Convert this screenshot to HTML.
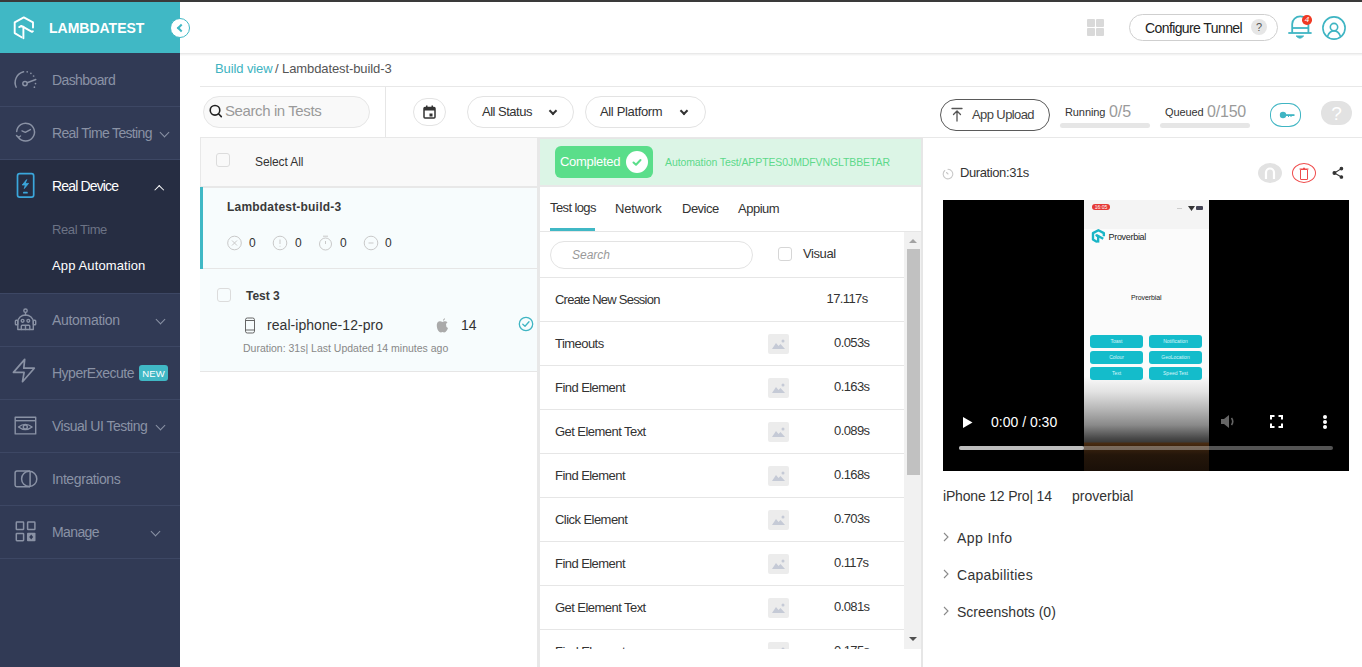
<!DOCTYPE html>
<html><head><meta charset="utf-8">
<style>
*{box-sizing:border-box;margin:0;padding:0}
html,body{width:1362px;height:667px;overflow:hidden;background:#fff;font-family:"Liberation Sans",sans-serif;color:#333}
.a{position:absolute}
.t{position:absolute;white-space:nowrap;line-height:1}
#topbar{left:0;top:0;width:1362px;height:2px;background:#3a3a3a}
#side{left:0;top:2px;width:180px;height:665px;background:#313a55}
#logo{left:0;top:2px;width:180px;height:51px;background:#40b8c5}
.si{position:absolute;left:0;width:180px;height:53px;border-bottom:1px solid #3d4764}
.st{position:absolute;left:52px;font-size:14px;color:#8a92a5;white-space:nowrap;line-height:1}
.chev{position:absolute;width:7px;height:7px;border-right:1.5px solid #8a92a5;border-bottom:1.5px solid #8a92a5;transform:rotate(45deg)}
</style></head><body>
<div id="topbar" class="a"></div>
<div id="side" class="a"></div>
<div id="logo" class="a"></div>
<!-- logo icon -->
<svg class="a" style="left:8px;top:12px" width="32" height="32" viewBox="0 0 32 32" fill="none" stroke="#fff" stroke-width="1.9" stroke-linecap="round" stroke-linejoin="round">
<path d="M13.6 25.2 L6.7 21.1 V10.3 L15.8 5.4 L25 10.3 V15.6"/>
<path d="M11.2 15.1 L13.3 13.9 L24 19.9 L24.9 19.3"/>
<path d="M15.4 14.8 V26.3"/>
</svg>
<div class="t" style="left:49px;top:21px;font-size:14px;font-weight:bold;color:#fff;letter-spacing:0">LAMBDATEST</div>
<!-- collapse btn -->
<div class="a" style="left:170px;top:18px;width:20px;height:20px;border-radius:50%;background:#fff;border:1px solid #40b8c5"></div>
<div class="a" style="left:178px;top:24.5px;width:6px;height:6px;border-left:2px solid #40b8c5;border-bottom:2px solid #40b8c5;transform:rotate(45deg)"></div>

<!-- sidebar items -->
<div class="si" style="top:54px"></div>
<div class="st" style="top:72.5px;letter-spacing:-0.6px">Dashboard</div>
<div class="si" style="top:107px"></div>
<div class="st" style="top:125.5px;letter-spacing:-0.66px">Real Time Testing</div>
<div class="chev" style="left:160.5px;top:129px"></div>
<div class="a" style="left:0;top:160px;width:180px;height:134px;background:#262d42;border-bottom:1px solid #3d4764"></div>
<div class="st" style="top:178.5px;color:#fff;letter-spacing:-0.85px">Real Device</div>
<div class="chev" style="left:156px;top:187px;width:6.5px;height:6.5px;border-color:#fff;border-width:1.8px;transform:rotate(-135deg)"></div>
<div class="st" style="top:223px;font-size:13px;color:#6c7385;letter-spacing:-0.4px">Real Time</div>
<div class="st" style="top:259px;font-size:13px;color:#fff;letter-spacing:0.12px">App Automation</div>
<div class="si" style="top:294px"></div>
<div class="st" style="top:312.5px;letter-spacing:-0.3px">Automation</div>
<div class="chev" style="left:157px;top:316px"></div>
<div class="si" style="top:347px"></div>
<div class="st" style="top:365.5px;letter-spacing:-0.5px">HyperExecute</div>
<div class="a" style="left:139px;top:365px;width:29px;height:16px;border-radius:3px;background:#40b8c5;color:#fff;font-size:9.5px;line-height:17px;text-align:center;letter-spacing:0.1px">NEW</div>
<div class="si" style="top:400px"></div>
<div class="st" style="top:418.5px;letter-spacing:-0.5px">Visual UI Testing</div>
<div class="chev" style="left:156.5px;top:422px"></div>
<div class="si" style="top:453px"></div>
<div class="st" style="top:471.5px;letter-spacing:-0.4px">Integrations</div>
<div class="si" style="top:506px"></div>
<div class="st" style="top:524.5px;letter-spacing:-0.6px">Manage</div>
<div class="chev" style="left:151.5px;top:528px"></div>

<!-- header -->
<div class="a" style="left:180px;top:53px;width:1182px;height:1px;background:#e9e9e9"></div>
<div class="a" style="left:180px;top:54px;width:1182px;height:1px;background:#f3f3f3"></div>
<div class="a" style="left:180px;top:55px;width:1182px;height:1px;background:#fafafa"></div>
<!-- grid icon -->
<div class="a" style="left:1087px;top:19px;width:8px;height:8px;background:#d9d9d9;border-radius:1px"></div>
<div class="a" style="left:1096px;top:19px;width:8px;height:8px;background:#d9d9d9;border-radius:1px"></div>
<div class="a" style="left:1087px;top:28px;width:8px;height:8px;background:#d9d9d9;border-radius:1px"></div>
<div class="a" style="left:1096px;top:28px;width:8px;height:8px;background:#d9d9d9;border-radius:1px"></div>
<!-- configure tunnel -->
<div class="a" style="left:1129px;top:14px;width:149px;height:27px;border:1px solid #cfcfcf;border-radius:14px"></div>
<div class="t" style="left:1145px;top:21px;font-size:14px;color:#222;letter-spacing:-0.6px">Configure Tunnel</div>
<div class="a" style="left:1251px;top:19px;width:16px;height:16px;border-radius:50%;background:#e6e6e6;color:#555;font-size:11px;line-height:16px;text-align:center">?</div>
<!-- bell -->
<svg class="a" style="left:1286px;top:14px" width="28" height="28" viewBox="0 0 28 28" fill="none" stroke="#3fb5c3" stroke-width="1.8" stroke-linecap="butt" stroke-linejoin="round">
<path d="M6.2 19 V10 A8.1 7.6 0 0 1 22.4 10 V19"/>
<path d="M6.2 14 H22.4"/>
<path d="M2.3 19 H25.6"/>
<path d="M10.2 22 H17.6 Q14 26.3 10.2 22 Z" fill="#3fb5c3" stroke-width="1"/>
</svg>
<div class="a" style="left:1302.2px;top:15.2px;width:9.6px;height:9.6px;border-radius:50%;background:#f03a24;color:#fff;font-size:8px;line-height:10px;text-align:center;font-style:italic">4</div>
<!-- user -->
<svg class="a" style="left:1322px;top:16px" width="24" height="24" viewBox="0 0 24 24" fill="none" stroke="#3fb5c3" stroke-width="1.6">
<circle cx="12" cy="12" r="11.1"/>
<circle cx="12" cy="11.1" r="3.7"/>
<path d="M5.6 20.2 Q7.5 14.9 12 14.9 Q16.5 14.9 18.4 20.2"/>
</svg>
<!-- breadcrumb -->
<div class="t" style="left:215px;top:62px;font-size:13px;color:#40b3c1;letter-spacing:-0.1px">Build view</div>
<div class="t" style="left:275px;top:62px;font-size:13px;color:#555;letter-spacing:-0.1px">/ Lambdatest-build-3</div>
<div class="a" style="left:200px;top:86px;width:1162px;height:1px;background:#e8e8e8"></div>
<!-- toolbar -->
<div class="a" style="left:203px;top:96px;width:167px;height:32px;border:1px solid #e6e6e6;border-radius:16px;background:#f9f9f9"></div>
<svg class="a" style="left:209px;top:104px" width="14" height="15" viewBox="0 0 14 15" fill="none" stroke="#222" stroke-width="1.6" stroke-linecap="round">
<circle cx="6" cy="6.3" r="4.8"/><path d="M9.5 9.8 L12.3 12.6"/>
</svg>
<div class="t" style="left:225px;top:103px;font-size:15px;color:#9a9a9a;letter-spacing:-0.4px">Search in Tests</div>
<div class="a" style="left:385px;top:87px;width:1px;height:50px;background:#e6e6e6"></div>
<div class="a" style="left:413px;top:98px;width:33px;height:28px;border:1px solid #e3e3e3;border-radius:14px"></div>
<svg class="a" style="left:423px;top:105px" width="13" height="14" viewBox="0 0 13 14">
<rect x="1" y="2.5" width="11" height="10.5" rx="1" fill="none" stroke="#333" stroke-width="1.5"/>
<rect x="1" y="2.5" width="11" height="3" fill="#333"/>
<rect x="3" y="0.5" width="1.5" height="3" fill="#333"/><rect x="8.5" y="0.5" width="1.5" height="3" fill="#333"/>
<rect x="6.5" y="8.5" width="3" height="3" fill="#333"/>
</svg>
<div class="a" style="left:467px;top:96px;width:107px;height:32px;border:1px solid #e3e3e3;border-radius:16px"></div>
<div class="t" style="left:482px;top:105px;font-size:13px;color:#333;letter-spacing:-0.5px">All Status</div>
<div class="a" style="left:550px;top:107.5px;width:6px;height:6px;border-right:2px solid #333;border-bottom:2px solid #333;transform:rotate(45deg)"></div>
<div class="a" style="left:585px;top:96px;width:121px;height:32px;border:1px solid #e3e3e3;border-radius:16px"></div>
<div class="t" style="left:600px;top:105px;font-size:13px;color:#333;letter-spacing:-0.35px">All Platform</div>
<div class="a" style="left:681px;top:107.5px;width:6px;height:6px;border-right:2px solid #333;border-bottom:2px solid #333;transform:rotate(45deg)"></div>

<div class="a" style="left:940px;top:99px;width:110px;height:32px;border:1px solid #5a5a5a;border-radius:16px"></div>
<svg class="a" style="left:951px;top:107px" width="12" height="15" viewBox="0 0 12 15" fill="none" stroke="#555" stroke-width="1.3" stroke-linecap="round">
<path d="M1 1.5 H11 M6 4 V14 M2.5 7.5 L6 4 L9.5 7.5"/>
</svg>
<div class="t" style="left:972px;top:108px;font-size:13px;color:#444;letter-spacing:-0.6px">App Upload</div>
<div class="t" style="left:1065px;top:107px;font-size:11px;color:#333;letter-spacing:-0.1px">Running</div>
<div class="t" style="left:1109px;top:104px;font-size:16px;color:#9a9a9a;letter-spacing:-0.1px">0/5</div>
<div class="a" style="left:1060px;top:123px;width:90px;height:5px;border-radius:3px;background:#e6e6e6"></div>
<div class="t" style="left:1165px;top:107px;font-size:11px;color:#333;letter-spacing:-0.1px">Queued</div>
<div class="t" style="left:1207px;top:104px;font-size:16px;color:#9a9a9a;letter-spacing:-0.2px">0/150</div>
<div class="a" style="left:1160px;top:123px;width:90px;height:5px;border-radius:3px;background:#e6e6e6"></div>
<div class="a" style="left:1270px;top:103px;width:31px;height:24px;border:1.3px solid #3fb5c3;border-radius:12px/11px"></div>
<svg class="a" style="left:1279px;top:110px" width="16" height="10" viewBox="0 0 16 10" fill="#3fb5c3">
<circle cx="4" cy="5" r="3.2"/><rect x="6" y="4.2" width="9" height="1.8"/><path d="M9 6 H10 V7 H9 Z M11.5 6 H12.5 V7 H11.5 Z" /><path d="M15 4.2 L16 5.1 L15 6 Z"/>
</svg>
<div class="a" style="left:1321px;top:101px;width:31px;height:24px;border-radius:12px;background:#e2e2e2;color:#fff;font-size:19px;line-height:25px;text-align:center">?</div>
<div class="a" style="left:200px;top:137px;width:1162px;height:1px;background:#e8e8e8"></div>
<!-- list panel -->
<div class="a" style="left:200px;top:138px;width:337px;height:50px;background:#f9f9f9;border-left:1px solid #e8e8e8;border-bottom:2px solid #e8e8e8"></div>
<div class="a" style="left:216px;top:153px;width:14px;height:14px;border:1px solid #dcdcdc;border-radius:3px"></div>
<div class="t" style="left:255px;top:156px;font-size:12px;color:#333;letter-spacing:-0.1px">Select All</div>
<div class="a" style="left:200px;top:188px;width:337px;height:81px;background:#f7fcfd;border-bottom:1px solid #e6e6e6"></div>
<div class="a" style="left:200px;top:187px;width:3px;height:82px;background:#40b8c5"></div>
<div class="t" style="left:227px;top:201px;font-size:12px;font-weight:bold;color:#3a3a3a;letter-spacing:0.2px">Lambdatest-build-3</div>
<svg class="a" style="left:227px;top:235px" width="170" height="16" viewBox="0 0 170 16" fill="none" stroke="#c9c9c9" stroke-width="1">
<circle cx="7.5" cy="8" r="6.8"/><path d="M5 5.5 L10 10.5 M10 5.5 L5 10.5"/>
<circle cx="53" cy="8" r="6.8"/><path d="M53 4.5 V9 M53 10.8 V11.6"/>
<circle cx="98.5" cy="9" r="6"/><path d="M96 1.2 H101 M98.5 6 V9"/>
<circle cx="144" cy="8" r="6.8"/><path d="M141.5 8 H146.5"/>
</svg>
<div class="t" style="left:249px;top:237px;font-size:12px;color:#333">0</div>
<div class="t" style="left:295px;top:237px;font-size:12px;color:#333">0</div>
<div class="t" style="left:340px;top:237px;font-size:12px;color:#333">0</div>
<div class="t" style="left:385px;top:237px;font-size:12px;color:#333">0</div>
<div class="a" style="left:200px;top:269px;width:337px;height:103px;background:#f7fcfd;border-bottom:1px solid #e6e6e6"></div>
<div class="a" style="left:217px;top:288px;width:14px;height:14px;border:1px solid #dcdcdc;border-radius:3px"></div>
<div class="t" style="left:246px;top:290px;font-size:12px;font-weight:bold;color:#3a3a3a;letter-spacing:0px">Test 3</div>
<svg class="a" style="left:244px;top:317px" width="12" height="17" viewBox="0 0 12 17" fill="none" stroke="#666" stroke-width="1">
<rect x="1.5" y="1" width="9" height="15" rx="1.8"/><path d="M1.5 3.5 H10.5 M1.5 13 H10.5"/>
</svg>
<div class="t" style="left:267px;top:318px;font-size:14px;color:#333;letter-spacing:0.05px">real-iphone-12-pro</div>
<svg class="a" style="left:436px;top:317px" width="13" height="16" viewBox="0 0 13 16" fill="#aaa">
<path d="M9 1 Q9.2 3 7 4 Q6.8 2 9 1 Z"/>
<path d="M6.5 5 Q5 4 3.5 4.3 Q0.5 5 0.8 9 Q1.2 13.5 3.5 15 Q4.8 15.8 6.5 15 Q8.2 15.8 9.5 15 Q11.2 13.8 12 11 Q9.8 10 10 7.5 Q10.2 6 11.5 5.2 Q10 4 8.5 4.3 Q7.5 4.5 6.5 5 Z"/>
</svg>
<div class="t" style="left:461px;top:318px;font-size:14px;color:#333">14</div>
<svg class="a" style="left:518px;top:316px" width="16" height="16" viewBox="0 0 16 16" fill="none" stroke="#3fb5c3" stroke-width="1.3" stroke-linecap="round" stroke-linejoin="round">
<circle cx="8" cy="8" r="6.7"/><path d="M4.8 8.3 L7 10.3 L11 5.8"/>
</svg>
<div class="t" style="left:243px;top:343px;font-size:10.5px;color:#888;letter-spacing:0">Duration: 31s| Last Updated 14 minutes ago</div>
<div class="a" style="left:537px;top:138px;width:3px;height:529px;background:#e8e8e8"></div>
<!-- logs panel -->
<div class="a" style="left:540px;top:138px;width:381px;height:1px;background:#e6e6e6"></div>
<div class="a" style="left:540px;top:139px;width:381px;height:47px;background:#dcf5e6"></div>
<div class="a" style="left:540px;top:185px;width:381px;height:2px;background:#e8e8e8"></div>
<div class="a" style="left:555px;top:146px;width:98px;height:32px;background:#5ade8a;border-radius:6px"></div>
<div class="t" style="left:560px;top:155px;font-size:13px;color:#fff;letter-spacing:-0.3px">Completed</div>
<div class="a" style="left:626px;top:151px;width:22px;height:22px;border-radius:50%;background:#fff"></div>
<svg class="a" style="left:630px;top:155px" width="14" height="14" viewBox="0 0 14 14" fill="none" stroke="#5ade8a" stroke-width="2" stroke-linecap="round" stroke-linejoin="round"><path d="M3.5 7.5 L6 9.8 L10.5 5"/></svg>
<div class="t" style="left:665px;top:157px;font-size:10.5px;color:#5cd98a;letter-spacing:-0.1px">Automation Test/APPTES0JMDFVNGLTBBETAR</div>
<div class="a" style="left:921px;top:138px;width:2px;height:529px;background:#e6e6e6"></div>
<!-- tabs -->
<div class="t" style="left:550px;top:201px;font-size:13px;color:#333;letter-spacing:-0.6px">Test logs</div>
<div class="t" style="left:615px;top:202px;font-size:13px;color:#333;letter-spacing:-0.15px">Network</div>
<div class="t" style="left:682px;top:202px;font-size:13px;color:#333;letter-spacing:-0.5px">Device</div>
<div class="t" style="left:738px;top:202px;font-size:13px;color:#333;letter-spacing:-0.5px">Appium</div>
<div class="a" style="left:550px;top:228px;width:45px;height:3px;background:#40b8c5"></div>
<div class="a" style="left:540px;top:231px;width:381px;height:1px;background:#e6e6e6"></div>
<!-- logs list -->
<div class="a" style="left:540px;top:232px;width:381px;height:417px;overflow:hidden">
<div class="a" style="left:10px;top:9px;width:203px;height:28px;border:1px solid #e3e3e3;border-radius:14px"></div>
<div class="t" style="left:32px;top:17px;font-size:12px;font-style:italic;color:#999">Search</div>
<div class="a" style="left:238px;top:15px;width:14px;height:14px;border:1px solid #d6d6d6;border-radius:3px"></div>
<div class="t" style="left:263px;top:15px;font-size:13px;color:#333;letter-spacing:-0.4px">Visual</div>
<div class="a" style="left:0;top:45px;width:364px;height:1px;background:#e6e6e6"></div>
<div class="a" style="left:0;top:46px;width:364px;height:44px;border-bottom:1px solid #e6e6e6"></div>
<div class="t" style="left:15px;top:61px;font-size:13px;color:#333;letter-spacing:-0.77px">Create New Session</div>
<div class="t" style="left:286.5px;top:60px;font-size:13px;color:#333;letter-spacing:-0.6px">17.117s</div>
<div class="a" style="left:0;top:90px;width:364px;height:44px;border-bottom:1px solid #e6e6e6"></div>
<div class="t" style="left:15px;top:105px;font-size:13px;color:#333;letter-spacing:-0.55px">Timeouts</div>
<div class="a" style="left:228px;top:102px;width:21px;height:20px;background:#ececec;border-radius:2px"></div>
<svg class="a" style="left:232px;top:107px" width="13" height="10" viewBox="0 0 13 10" fill="#c5cad6"><path d="M0 10 L4 4 L6.5 7 L8.5 5 L13 10 Z"/><circle cx="11" cy="2" r="1.5"/></svg>
<div class="t" style="left:294px;top:104px;font-size:13px;color:#333;letter-spacing:-0.6px">0.053s</div>
<div class="a" style="left:0;top:134px;width:364px;height:44px;border-bottom:1px solid #e6e6e6"></div>
<div class="t" style="left:15px;top:149px;font-size:13px;color:#333;letter-spacing:-0.55px">Find Element</div>
<div class="a" style="left:228px;top:146px;width:21px;height:20px;background:#ececec;border-radius:2px"></div>
<svg class="a" style="left:232px;top:151px" width="13" height="10" viewBox="0 0 13 10" fill="#c5cad6"><path d="M0 10 L4 4 L6.5 7 L8.5 5 L13 10 Z"/><circle cx="11" cy="2" r="1.5"/></svg>
<div class="t" style="left:294px;top:148px;font-size:13px;color:#333;letter-spacing:-0.6px">0.163s</div>
<div class="a" style="left:0;top:178px;width:364px;height:44px;border-bottom:1px solid #e6e6e6"></div>
<div class="t" style="left:15px;top:193px;font-size:13px;color:#333;letter-spacing:-0.55px">Get Element Text</div>
<div class="a" style="left:228px;top:190px;width:21px;height:20px;background:#ececec;border-radius:2px"></div>
<svg class="a" style="left:232px;top:195px" width="13" height="10" viewBox="0 0 13 10" fill="#c5cad6"><path d="M0 10 L4 4 L6.5 7 L8.5 5 L13 10 Z"/><circle cx="11" cy="2" r="1.5"/></svg>
<div class="t" style="left:294px;top:192px;font-size:13px;color:#333;letter-spacing:-0.6px">0.089s</div>
<div class="a" style="left:0;top:222px;width:364px;height:44px;border-bottom:1px solid #e6e6e6"></div>
<div class="t" style="left:15px;top:237px;font-size:13px;color:#333;letter-spacing:-0.55px">Find Element</div>
<div class="a" style="left:228px;top:234px;width:21px;height:20px;background:#ececec;border-radius:2px"></div>
<svg class="a" style="left:232px;top:239px" width="13" height="10" viewBox="0 0 13 10" fill="#c5cad6"><path d="M0 10 L4 4 L6.5 7 L8.5 5 L13 10 Z"/><circle cx="11" cy="2" r="1.5"/></svg>
<div class="t" style="left:294px;top:236px;font-size:13px;color:#333;letter-spacing:-0.6px">0.168s</div>
<div class="a" style="left:0;top:266px;width:364px;height:44px;border-bottom:1px solid #e6e6e6"></div>
<div class="t" style="left:15px;top:281px;font-size:13px;color:#333;letter-spacing:-0.55px">Click Element</div>
<div class="a" style="left:228px;top:278px;width:21px;height:20px;background:#ececec;border-radius:2px"></div>
<svg class="a" style="left:232px;top:283px" width="13" height="10" viewBox="0 0 13 10" fill="#c5cad6"><path d="M0 10 L4 4 L6.5 7 L8.5 5 L13 10 Z"/><circle cx="11" cy="2" r="1.5"/></svg>
<div class="t" style="left:294px;top:280px;font-size:13px;color:#333;letter-spacing:-0.6px">0.703s</div>
<div class="a" style="left:0;top:310px;width:364px;height:44px;border-bottom:1px solid #e6e6e6"></div>
<div class="t" style="left:15px;top:325px;font-size:13px;color:#333;letter-spacing:-0.55px">Find Element</div>
<div class="a" style="left:228px;top:322px;width:21px;height:20px;background:#ececec;border-radius:2px"></div>
<svg class="a" style="left:232px;top:327px" width="13" height="10" viewBox="0 0 13 10" fill="#c5cad6"><path d="M0 10 L4 4 L6.5 7 L8.5 5 L13 10 Z"/><circle cx="11" cy="2" r="1.5"/></svg>
<div class="t" style="left:294px;top:324px;font-size:13px;color:#333;letter-spacing:-0.6px">0.117s</div>
<div class="a" style="left:0;top:354px;width:364px;height:44px;border-bottom:1px solid #e6e6e6"></div>
<div class="t" style="left:15px;top:369px;font-size:13px;color:#333;letter-spacing:-0.55px">Get Element Text</div>
<div class="a" style="left:228px;top:366px;width:21px;height:20px;background:#ececec;border-radius:2px"></div>
<svg class="a" style="left:232px;top:371px" width="13" height="10" viewBox="0 0 13 10" fill="#c5cad6"><path d="M0 10 L4 4 L6.5 7 L8.5 5 L13 10 Z"/><circle cx="11" cy="2" r="1.5"/></svg>
<div class="t" style="left:294px;top:368px;font-size:13px;color:#333;letter-spacing:-0.6px">0.081s</div>
<div class="a" style="left:0;top:398px;width:364px;height:44px;border-bottom:1px solid #e6e6e6"></div>
<div class="t" style="left:15px;top:413px;font-size:13px;color:#333;letter-spacing:-0.55px">Find Element</div>
<div class="a" style="left:228px;top:410px;width:21px;height:20px;background:#ececec;border-radius:2px"></div>
<svg class="a" style="left:232px;top:415px" width="13" height="10" viewBox="0 0 13 10" fill="#c5cad6"><path d="M0 10 L4 4 L6.5 7 L8.5 5 L13 10 Z"/><circle cx="11" cy="2" r="1.5"/></svg>
<div class="t" style="left:294px;top:412px;font-size:13px;color:#333;letter-spacing:-0.6px">0.175s</div>
<div class="a" style="left:364px;top:0;width:17px;height:417px;background:#f1f1f1"></div>
<div class="a" style="left:367px;top:17px;width:13px;height:226px;background:#c1c1c1"></div>
<svg class="a" style="left:367px;top:5px" width="12" height="8" viewBox="0 0 12 8" fill="#a3a3a3"><path d="M2 6 L6 2 L10 6 Z"/></svg>
<svg class="a" style="left:367px;top:403px" width="12" height="8" viewBox="0 0 12 8" fill="#505050"><path d="M2 2 L10 2 L6 6 Z"/></svg>
</div>
<!-- detail panel -->
<svg class="a" style="left:942px;top:167px" width="12" height="13" viewBox="0 0 12 13" fill="none" stroke="#c8c8c8" stroke-width="1.1" stroke-linecap="round">
<path d="M6 2.3 A4.8 4.8 0 1 1 2.8 3.5"/><path d="M4.5 5.5 L6 7"/>
</svg>
<div class="t" style="left:960px;top:166px;font-size:13px;color:#333;letter-spacing:-0.4px">Duration:31s</div>
<div class="a" style="left:1258px;top:163px;width:24px;height:20px;border-radius:50%;background:#e2e2e2"></div>
<svg class="a" style="left:1262px;top:165px" width="16" height="16" viewBox="0 0 16 16" fill="none" stroke="#fff" stroke-width="2.2"><path d="M4 14 V7.5 A4 4 0 0 1 12 7.5 V14"/></svg>
<div class="a" style="left:1292px;top:163px;width:24px;height:20px;border-radius:50%;border:1.1px solid #ef4b4b"></div>
<svg class="a" style="left:1297px;top:166px" width="14" height="16" viewBox="0 0 14 16" fill="none" stroke="#ef4b4b" stroke-width="1"><rect x="3.5" y="3.5" width="7" height="10" rx="0.3"/><path d="M2.5 3 H11.5"/><path d="M6 2.3 H8" stroke-width="1.3"/></svg>
<svg class="a" style="left:1331px;top:166px" width="14" height="14" viewBox="0 0 14 14" fill="#333" stroke="#333" stroke-width="1.1">
<circle cx="10.4" cy="2.6" r="1.3"/><circle cx="3.4" cy="7" r="1.4"/><circle cx="10.4" cy="11" r="1.3"/><path d="M10.4 2.6 L3.4 7 L10.4 11" fill="none"/>
</svg>
<!-- video -->
<div class="a" style="left:943px;top:200px;width:406px;height:271px;background:#000;overflow:hidden">
<div class="a" style="left:141px;top:0;width:125px;height:271px;background:linear-gradient(#f4f4f4 0,#f4f4f4 29px,#fbfbfb 29px,#fbfbfb 176px,#e2e2e2 192px,#b4b4b4 210px,#8a8a8a 225px,#4a4a4a 238px,#3a3a3a 242px,#4a2c12 243px,#3b230e 247px,#24160a 255px,#1a1008 271px)"></div>
<div class="a" style="left:149px;top:3.5px;width:18px;height:6.5px;border-radius:3px;background:#e53935"></div>
<div class="t" style="left:149px;top:4.5px;width:18px;text-align:center;font-size:5px;color:#fff">16:05</div>
<div class="a" style="left:234px;top:7.5px;width:5px;height:1px;background:#ccc"></div>
<svg class="a" style="left:245px;top:5.5px" width="7" height="5" viewBox="0 0 7 5" fill="#333"><path d="M0 0 H7 L3.5 5 Z"/></svg>
<div class="a" style="left:252.5px;top:6px;width:7px;height:3.5px;background:#445;border-radius:1px"></div>
<svg class="a" style="left:146px;top:27px" width="19" height="19" viewBox="0 0 32 32" fill="none" stroke="#1ab5c6" stroke-width="4" stroke-linejoin="round"><path d="M13.6 25.2 L6.7 21.1 V10.3 L15.8 5.4 L25 10.3 V15.6"/><path d="M11.2 15.1 L13.3 13.9 L24 19.9"/><path d="M15.4 14.8 V26.3"/></svg>
<div class="t" style="left:165.5px;top:33px;font-size:9px;color:#222;letter-spacing:-0.3px">Proverbial</div>
<div class="t" style="left:188px;top:93.5px;font-size:7px;color:#222;letter-spacing:-0.1px">Proverbial</div>
<div class="a" style="left:147px;top:135px;width:53px;height:13px;border-radius:3px;background:#14bccb"></div>
<div class="a" style="left:206px;top:135px;width:53px;height:13px;border-radius:3px;background:#14bccb"></div>
<div class="a" style="left:147px;top:151px;width:53px;height:13px;border-radius:3px;background:#14bccb"></div>
<div class="a" style="left:206px;top:151px;width:53px;height:13px;border-radius:3px;background:#14bccb"></div>
<div class="a" style="left:147px;top:167px;width:53px;height:13px;border-radius:3px;background:#14bccb"></div>
<div class="a" style="left:206px;top:167px;width:53px;height:13px;border-radius:3px;background:#14bccb"></div>
<div class="t" style="left:147px;top:139px;width:53px;text-align:center;font-size:5px;color:#d8f6fa">Toast</div>
<div class="t" style="left:206px;top:139px;width:53px;text-align:center;font-size:5px;color:#d8f6fa">Notification</div>
<div class="t" style="left:147px;top:155px;width:53px;text-align:center;font-size:5px;color:#d8f6fa">Colour</div>
<div class="t" style="left:206px;top:155px;width:53px;text-align:center;font-size:5px;color:#d8f6fa">GeoLocation</div>
<div class="t" style="left:147px;top:171px;width:53px;text-align:center;font-size:5px;color:#d8f6fa">Text</div>
<div class="t" style="left:206px;top:171px;width:53px;text-align:center;font-size:5px;color:#d8f6fa">Speed Test</div>
<svg class="a" style="left:20px;top:216.5px" width="10" height="11" viewBox="0 0 10 11" fill="#fff"><path d="M0 0 L9.5 5.5 L0 11 Z"/></svg>
<div class="t" style="left:48px;top:215px;font-size:14px;color:#fff;letter-spacing:0px">0:00 / 0:30</div>
<svg class="a" style="left:278px;top:214px" width="16" height="15" viewBox="0 0 16 15" fill="#666"><path d="M0 5 H3 L8 1 V14 L3 10 H0 Z"/><path d="M10.5 4 Q13 7.5 10.5 11" fill="none" stroke="#666" stroke-width="1.6"/></svg>
<svg class="a" style="left:327px;top:215px" width="13" height="13" viewBox="0 0 13 13" fill="none" stroke="#fff" stroke-width="2"><path d="M1 4.5 V1 H4.5 M8.5 1 H12 V4.5 M12 8.5 V12 H8.5 M4.5 12 H1 V8.5"/></svg>
<div class="a" style="left:380px;top:215px;width:4px;height:4px;border-radius:50%;background:#fff"></div>
<div class="a" style="left:380px;top:220px;width:4px;height:4px;border-radius:50%;background:#fff"></div>
<div class="a" style="left:380px;top:225px;width:4px;height:4px;border-radius:50%;background:#fff"></div>
<div class="a" style="left:16px;top:246px;width:374px;height:4px;border-radius:2px;background:rgba(255,255,255,0.33)"></div>
<div class="a" style="left:16px;top:246px;width:125px;height:4px;border-radius:2px;background:#bdbdbd"></div>
</div>
<div class="t" style="left:943px;top:489px;font-size:14px;color:#333;letter-spacing:-0.18px">iPhone 12 Pro| 14</div>
<div class="t" style="left:1072px;top:489px;font-size:14px;color:#333;letter-spacing:0px">proverbial</div>
<svg class="a" style="left:941px;top:531px" width="10" height="12" viewBox="0 0 10 12" fill="none" stroke="#8a8a8a" stroke-width="1.1"><path d="M3 2 L7 6 L3 10"/></svg>
<div class="t" style="left:957px;top:531px;font-size:14px;color:#333;letter-spacing:0.4px">App Info</div>
<svg class="a" style="left:941px;top:568px" width="10" height="12" viewBox="0 0 10 12" fill="none" stroke="#8a8a8a" stroke-width="1.1"><path d="M3 2 L7 6 L3 10"/></svg>
<div class="t" style="left:957px;top:568px;font-size:14px;color:#333;letter-spacing:0.3px">Capabilities</div>
<svg class="a" style="left:941px;top:605px" width="10" height="12" viewBox="0 0 10 12" fill="none" stroke="#8a8a8a" stroke-width="1.1"><path d="M3 2 L7 6 L3 10"/></svg>
<div class="t" style="left:957px;top:605px;font-size:14px;color:#333;letter-spacing:0">Screenshots (0)</div>
<!-- sidebar icons -->
<svg class="a" style="left:8px;top:62px" width="36" height="36" viewBox="0 0 36 36" fill="none" stroke="#8a92a5" stroke-width="1.45" stroke-linecap="round">
<path d="M8.2 25.2 A11 11 0 0 1 15.6 9.8"/>
<circle cx="19.2" cy="9.8" r="0.85" fill="#8a92a5" stroke="none"/><circle cx="22.9" cy="11.3" r="0.85" fill="#8a92a5" stroke="none"/><circle cx="25.6" cy="14" r="0.85" fill="#8a92a5" stroke="none"/><circle cx="27.5" cy="21.6" r="0.85" fill="#8a92a5" stroke="none"/><circle cx="26.4" cy="25.2" r="0.85" fill="#8a92a5" stroke="none"/>
<circle cx="17" cy="21.6" r="2.2"/>
<path d="M19.1 20.8 L27.8 17.5"/>
</svg>
<svg class="a" style="left:8px;top:115px" width="36" height="36" viewBox="0 0 36 36" fill="none" stroke="#8a92a5" stroke-width="1.45" stroke-linecap="round" stroke-linejoin="round">
<path d="M8.7 16.5 A8.9 8.9 0 1 1 10.5 22.5"/>
<path d="M8.5 20.5 L10.5 22.5 L12.5 21"/>
<path d="M14 15.9 L17.3 17.3 L22.4 14.6"/>
</svg>
<svg class="a" style="left:8px;top:168px" width="36" height="36" viewBox="0 0 36 36" fill="none" stroke="#3ba7dc" stroke-width="1.7" stroke-linecap="round" stroke-linejoin="round">
<rect x="9.5" y="5.7" width="16.2" height="23.5" rx="2.2"/>
<path d="M18.5 11.8 L14.2 17 H17.3 L16.3 20.6 L20.6 15.4 H17.6 Z" fill="#3ba7dc" stroke-width="0.8"/>
<path d="M15.8 24.7 H19"/>
</svg>
<svg class="a" style="left:8px;top:301px" width="36" height="36" viewBox="0 0 36 36" fill="none" stroke="#8a92a5" stroke-width="1.4" stroke-linecap="round" stroke-linejoin="round">
<circle cx="17.5" cy="9.7" r="1.7"/>
<path d="M17.5 11.4 V14.2"/>
<path d="M9.8 28.5 V21 A7.7 7 0 0 1 25.3 21 V28.5 Z"/>
<rect x="7.4" y="19.2" width="2.4" height="4.6" rx="0.8"/>
<rect x="25.3" y="19.2" width="2.4" height="4.6" rx="0.8"/>
<circle cx="14.6" cy="19.8" r="1.4"/><circle cx="20.3" cy="19.8" r="1.4"/>
<path d="M13.3 28.5 V25.2 A0.9 0.9 0 0 1 14.2 24.3 H20.9 A0.9 0.9 0 0 1 21.8 25.2 V28.5 M17.5 24.3 V28.5"/>
</svg>
<svg class="a" style="left:8px;top:354px" width="36" height="36" viewBox="0 0 36 36" fill="none" stroke="#8a92a5" stroke-width="1.7" stroke-linejoin="round">
<path d="M16.7 5.4 L5.4 18.4 H16.1 L14.5 27.7 L26.3 14.2 H15.8 Z"/>
</svg>
<svg class="a" style="left:8px;top:407px" width="36" height="36" viewBox="0 0 36 36" fill="none" stroke="#8a92a5" stroke-width="1.4" stroke-linejoin="round">
<rect x="7.2" y="10.2" width="20.5" height="16.7"/>
<path d="M7.2 13.7 H27.7"/>
<path d="M10.5 20 Q17.3 14.8 24.1 20 Q17.3 25.2 10.5 20 Z"/>
<circle cx="17.3" cy="20" r="2"/>
</svg>
<svg class="a" style="left:8px;top:460px" width="36" height="36" viewBox="0 0 36 36" fill="none" stroke="#8a92a5" stroke-width="1.5" stroke-linejoin="round">
<path d="M22 11.1 H8.8 A1.7 1.7 0 0 0 7.1 12.8 V25 A1.7 1.7 0 0 0 8.8 26.7 H22"/>
<circle cx="21.2" cy="18.9" r="7.6"/>
<path d="M22.1 11.3 V26.5"/>
</svg>
<svg class="a" style="left:8px;top:513px" width="36" height="36" viewBox="0 0 36 36" fill="none" stroke="#8a92a5" stroke-width="1.5">
<rect x="8.3" y="9.1" width="7.3" height="7.5" rx="0.6"/>
<rect x="19.6" y="9.1" width="7.3" height="7.5" rx="0.6"/>
<rect x="8.3" y="20.4" width="7.3" height="7.3" rx="0.6"/>
<rect x="19" y="19.8" width="8.5" height="8.5" rx="0.8" fill="#8a92a5" stroke="none"/>
<path d="M23.2 21.5 L25.2 24 L23.2 26.5 L21.2 24 Z" fill="#313a55" stroke="none"/>
</svg>
</body></html>
